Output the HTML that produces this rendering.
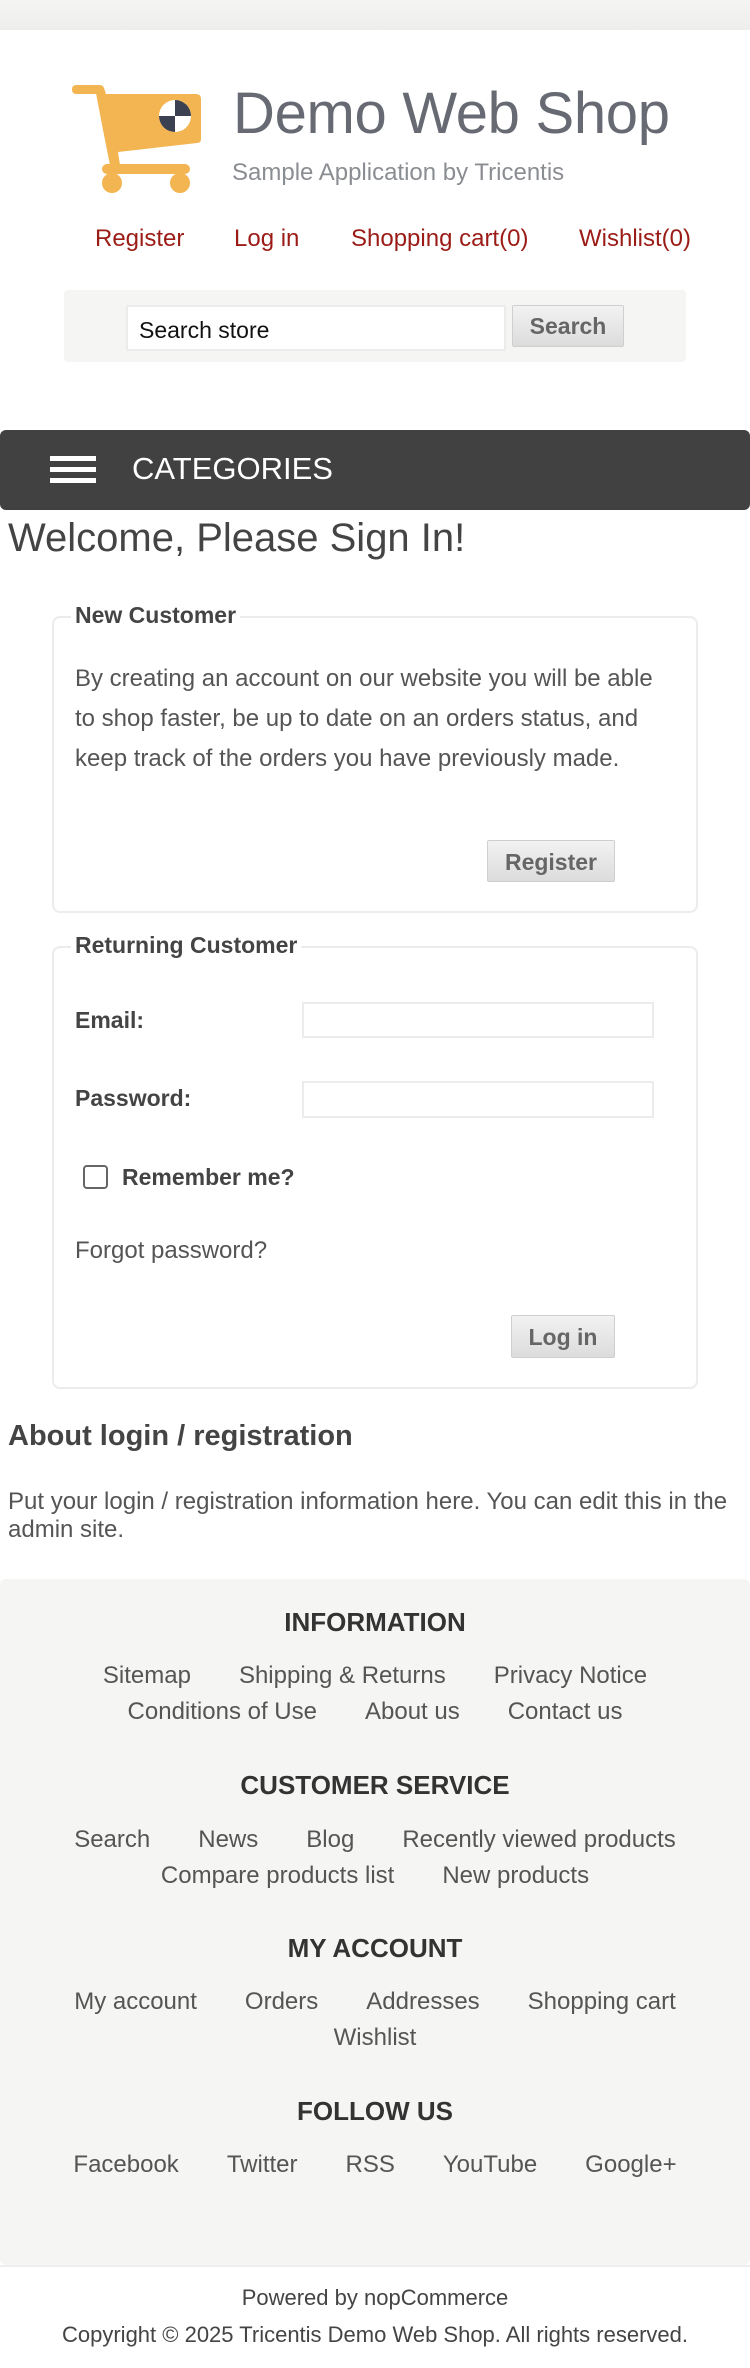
<!DOCTYPE html>
<html><head><meta charset="utf-8">
<style>
*{margin:0;padding:0;box-sizing:border-box}
body{width:750px;height:2368px;background:#fff;font-family:"Liberation Sans",Arial,sans-serif;color:#555;position:relative;overflow:hidden}
.abs{position:absolute}
.topbar{left:0;top:0;width:750px;height:30px;background:linear-gradient(#f4f4f2,#eeeeec)}
.title{left:233px;top:80px;font-size:58px;color:#676a72;letter-spacing:-0.3px;white-space:nowrap}
.sub{left:232px;top:159px;font-size:24px;color:#8a8d92;white-space:nowrap}
.hl{top:225px;font-size:24px;color:#9b1c16;white-space:nowrap}
.sbox{left:64px;top:290px;width:622px;height:72px;background:#f5f5f4;border-radius:4px}
.sin{left:126px;top:305px;width:380px;height:46px;border:2px solid #ececec;background:#fff;font-size:23px;color:#111;padding:10px 0 0 11px}
.btn{background:linear-gradient(#f2f2f2,#dcdcdc);border:1px solid #cfcfcf;border-radius:2px;font-weight:bold;color:#666;font-size:23px;text-align:center}
.cat{left:0;top:430px;width:750px;height:80px;background:#414141;border-radius:6px}
.cat span{position:absolute;left:50px;width:46px;height:5px;background:#fff}
.cat b{position:absolute;left:132px;top:21px;font-weight:normal;color:#fff;font-size:31px}
h1{position:absolute;left:8px;top:516px;font-size:40px;font-weight:normal;color:#444}
.fs{border:2px solid #ececec;border-radius:8px}
.lg{font-weight:bold;font-size:23px;color:#444;background:#fff;padding:0 4px}
.p{font-size:24px;color:#555;white-space:nowrap}
.inp{border:2px solid #ececec;background:#fff}
.foot{left:0;top:1579px;width:750px;height:686px;background:#f5f5f3;border-radius:6px}
.fh{left:0;width:750px;text-align:center;font-weight:bold;font-size:26px;color:#333}
.fl{left:0;width:750px;text-align:center;font-size:24px;color:#555;white-space:nowrap}
.fl span{margin:0 24px}
</style></head><body>
<div class="abs topbar"></div>
<svg class="abs" style="left:0;top:0" width="230" height="210">
<g fill="#f2b552">
<rect x="72" y="85" width="32" height="9" rx="4"/>
<path d="M95 88 L104 88 L106 94 L196 94 Q201 94 201 99 L201 139 Q201 143 197 143 L118 152 L120 165 L110 165 L103 130 Z"/>
<rect x="102" y="164" width="88" height="10" rx="5"/>
<circle cx="112" cy="183" r="10"/><circle cx="180" cy="183" r="10"/>
</g>
<circle cx="175" cy="116" r="16" fill="#fff"/>
<path d="M175 100 A16 16 0 0 1 191 116 L175 116 Z" fill="#3b4150"/>
<path d="M175 132 A16 16 0 0 1 159 116 L175 116 Z" fill="#3b4150"/>
</svg>
<div class="abs title">Demo Web Shop</div>
<div class="abs sub">Sample Application by Tricentis</div>
<div class="abs hl" style="left:95px">Register</div>
<div class="abs hl" style="left:234px">Log in</div>
<div class="abs hl" style="left:351px">Shopping cart(0)</div>
<div class="abs hl" style="left:579px">Wishlist(0)</div>
<div class="abs sbox"></div>
<div class="abs sin">Search store</div>
<div class="abs btn" style="left:512px;top:305px;width:112px;height:42px;line-height:40px">Search</div>
<div class="abs cat"><span style="top:26px"></span><span style="top:37px"></span><span style="top:48px"></span><b>CATEGORIES</b></div>
<h1>Welcome, Please Sign In!</h1>

<div class="abs fs" style="left:52px;top:616px;width:646px;height:297px"></div>
<div class="abs lg" style="left:71px;top:602px">New Customer</div>
<div class="abs p" style="left:75px;top:659px;line-height:40px">By creating an account on our website you will be able<br>to shop faster, be up to date on an orders status, and<br>keep track of the orders you have previously made.</div>
<div class="abs btn" style="left:487px;top:840px;width:128px;height:42px;line-height:42px">Register</div>

<div class="abs fs" style="left:52px;top:946px;width:646px;height:443px"></div>
<div class="abs lg" style="left:71px;top:932px">Returning Customer</div>
<div class="abs p" style="left:75px;top:1007px;font-weight:bold;color:#444;font-size:23px">Email:</div>
<div class="abs inp" style="left:302px;top:1002px;width:352px;height:36px"></div>
<div class="abs p" style="left:75px;top:1085px;font-weight:bold;color:#444;font-size:23px">Password:</div>
<div class="abs inp" style="left:302px;top:1081px;width:352px;height:37px"></div>
<div class="abs" style="left:83px;top:1165px;width:25px;height:24px;border:2px solid #666;border-radius:4px"></div>
<div class="abs p" style="left:122px;top:1164px;font-weight:bold;color:#444;font-size:23px">Remember me?</div>
<div class="abs p" style="left:75px;top:1237px">Forgot password?</div>
<div class="abs btn" style="left:511px;top:1315px;width:104px;height:43px;line-height:43px">Log in</div>

<div class="abs" style="left:8px;top:1420px;font-size:29px;font-weight:bold;color:#444">About login / registration</div>
<div class="abs p" style="left:8px;top:1488px;line-height:28px">Put your login / registration information here. You can edit this in the<br>admin site.</div>

<div class="abs foot"></div>
<div class="abs fh" style="top:1607px">INFORMATION</div>
<div class="abs fl" style="top:1658px;line-height:36px"><span>Sitemap</span><span>Shipping &amp; Returns</span><span>Privacy Notice</span><br><span>Conditions of Use</span><span>About us</span><span>Contact us</span></div>
<div class="abs fh" style="top:1770px">CUSTOMER SERVICE</div>
<div class="abs fl" style="top:1822px;line-height:36px"><span>Search</span><span>News</span><span>Blog</span><span>Recently viewed products</span><br><span>Compare products list</span><span>New products</span></div>
<div class="abs fh" style="top:1933px">MY ACCOUNT</div>
<div class="abs fl" style="top:1984px;line-height:36px"><span>My account</span><span>Orders</span><span>Addresses</span><span>Shopping cart</span><br><span>Wishlist</span></div>
<div class="abs fh" style="top:2096px">FOLLOW US</div>
<div class="abs fl" style="top:2151px"><span>Facebook</span><span>Twitter</span><span>RSS</span><span>YouTube</span><span>Google+</span></div>
<div class="abs" style="left:0;top:2265px;width:750px;height:2px;background:#eee"></div>
<div class="abs fl" style="top:2285px;font-size:22px;color:#444">Powered by nopCommerce</div>
<div class="abs fl" style="top:2322px;font-size:22px;color:#444">Copyright © 2025 Tricentis Demo Web Shop. All rights reserved.</div>
</body></html>
